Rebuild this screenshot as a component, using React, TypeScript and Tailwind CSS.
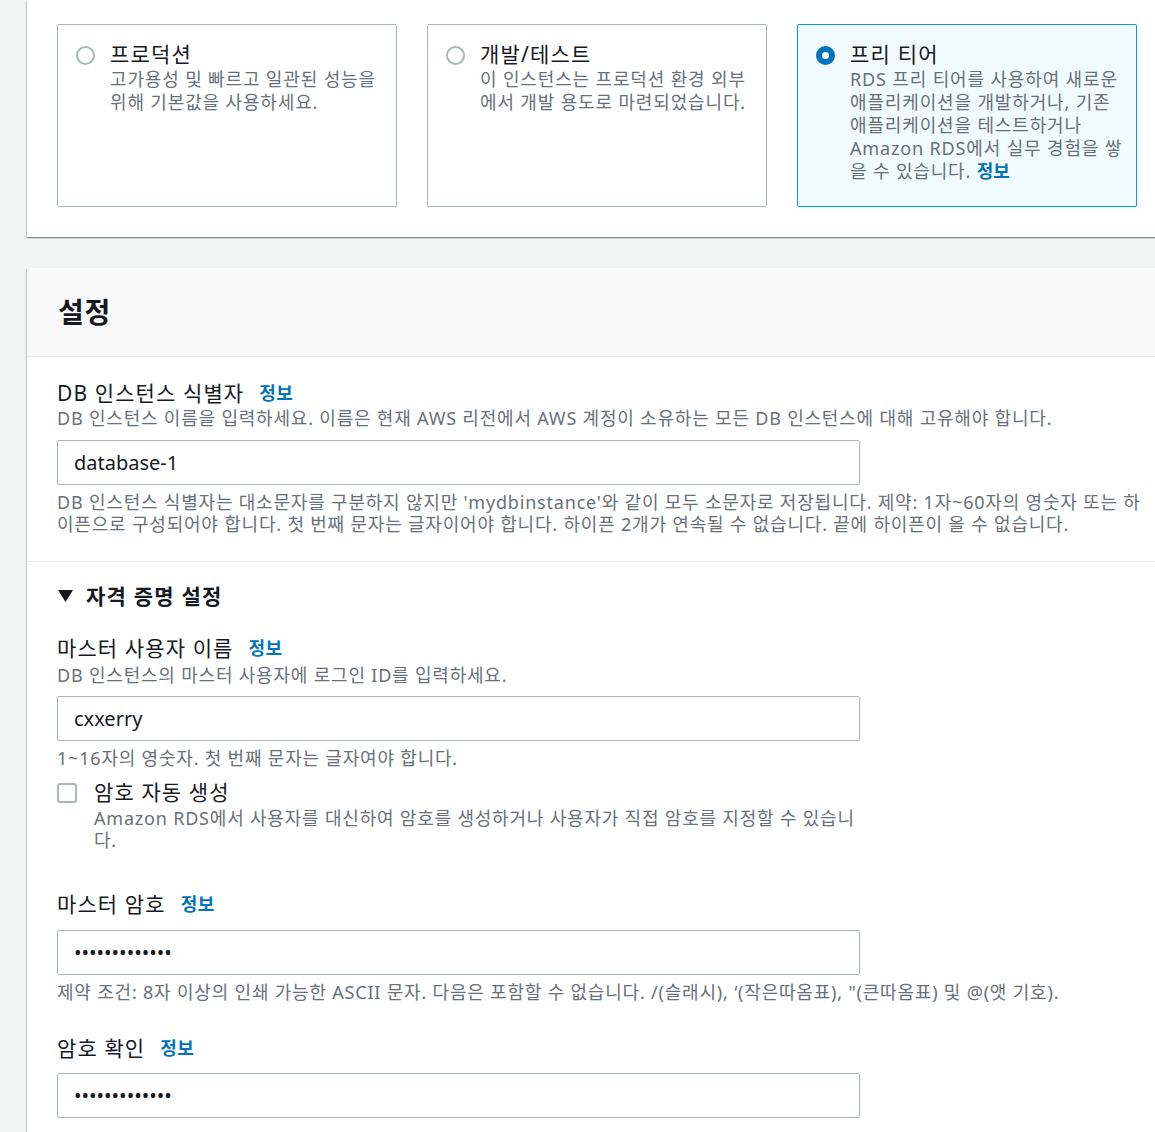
import type { ReactNode } from 'react'

const FONT = "font-['Noto_Sans','Noto_Sans_CJK_KR',sans-serif]"
const CARD_SHADOW =
  'shadow-[0_1px_1px_0_rgba(0,28,36,0.3),1px_1px_1px_0_rgba(0,28,36,0.15),-1px_1px_1px_0_rgba(0,28,36,0.15)]'

function InfoLink({ className = '' }: { className?: string }) {
  return <span className={`font-bold text-[18px] tracking-[0.5px] text-[#0073bb] ${className}`}>정보</span>
}

interface TileProps {
  title: string
  lines: ReactNode[]
  selected?: boolean
}

function RadioTile({ title, lines, selected = false }: TileProps) {
  return (
    <div
      className={`h-[183px] rounded-[2px] border pt-[16px] pl-[18px] flex gap-[15px] ${
        selected ? 'border-[#00a1c9] bg-[#f1faff]' : 'border-[#aab7b8] bg-white'
      }`}
    >
      {/* radio circle */}
      <div className="pt-[5px] shrink-0">
        {selected ? (
          <div className="w-[19px] h-[19px] rounded-full border-[6px] border-[#0073bb] bg-white" />
        ) : (
          <div className="w-[19px] h-[19px] rounded-full border-2 border-[#aab7b8] bg-white" />
        )}
      </div>
      <div>
        <div className="text-[21px] leading-[26px] tracking-[1.2px] text-[#16191f]">{title}</div>
        <div className="mt-[1px] text-[18px] leading-[23px] tracking-[0.85px] text-[#687078]">
          {lines.map((l, i) => (
            <div key={i} className="whitespace-nowrap">
              {l}
            </div>
          ))}
        </div>
      </div>
    </div>
  )
}

function Label({ children, className = '' }: { children: ReactNode; className?: string }) {
  return (
    <div className={`flex items-center gap-[15px] text-[21px] leading-[26px] tracking-[1.1px] text-[#16191f] ${className}`}>
      {children}
    </div>
  )
}

function Hint({ children, className = '' }: { children: ReactNode; className?: string }) {
  return <div className={`text-[18px] tracking-[0.8px] text-[#687078] ${className}`}>{children}</div>
}

function Field({ children, className = '' }: { children: ReactNode; className?: string }) {
  return (
    <div
      className={`w-[803px] h-[45px] rounded-[2px] border border-[#aab7b8] bg-white flex items-center pl-[16px] text-[20px] text-[#16191f] ${className}`}
    >
      {children}
    </div>
  )
}

function Dots() {
  return <span className="text-[20px] leading-none text-[#16191f]">{'•••••••••••••'}</span>
}

export default function App() {
  return (
    <div className={`${FONT} min-h-[1132px] bg-[#f2f3f3] pl-[27px] overflow-hidden`}>
      {/* environment templates */}
      <div className={`mr-[-10px] bg-white ${CARD_SHADOW} pt-[24px] pb-[30px] pl-[30px]`}>
        <div className="grid grid-cols-[340px_340px_340px] gap-[30px]">
          <RadioTile title="프로덕션" lines={['고가용성 및 빠르고 일관된 성능을', '위해 기본값을 사용하세요.']} />
          <RadioTile
            title="개발/테스트"
            lines={['이 인스턴스는 프로덕션 환경 외부', '에서 개발 용도로 마련되었습니다.']}
          />
          <RadioTile
            selected
            title="프리 티어"
            lines={[
              'RDS 프리 티어를 사용하여 새로운',
              '애플리케이션을 개발하거나, 기존',
              '애플리케이션을 테스트하거나',
              'Amazon RDS에서 실무 경험을 쌓',
              <>
                을 수 있습니다. <InfoLink className="tracking-normal" />
              </>,
            ]}
          />
        </div>
      </div>

      {/* settings */}
      <div className={`mt-[31px] mr-[-10px] bg-white ${CARD_SHADOW} pb-[20px]`}>
        <div className="h-[89px] bg-[#fafafa] border-b border-[#eaeded] flex items-center pl-[31px]">
          <h2 className="text-[28px] font-bold tracking-[0.8px] text-[#16191f]">설정</h2>
        </div>

        <div className="pl-[30px] pt-[23px] pb-[26px] border-b border-[#eaeded]">
          <Label>
            DB 인스턴스 식별자 <InfoLink />
          </Label>
          <Hint className="leading-[23px] mt-[1px]">
            DB 인스턴스 이름을 입력하세요. 이름은 현재 AWS 리전에서 AWS 계정이 소유하는 모든 DB 인스턴스에 대해
            고유해야 합니다.
          </Hint>
          <Field className="mt-[10px]">database-1</Field>
          <Hint className="leading-[22px] mt-[6px] whitespace-nowrap">
            <div>
              DB 인스턴스 식별자는 대소문자를 구분하지 않지만 'mydbinstance'와 같이 모두 소문자로 저장됩니다. 제약:
              1자~60자의 영숫자 또는 하
            </div>
            <div>
              이픈으로 구성되어야 합니다. 첫 번째 문자는 글자이어야 합니다. 하이픈 2개가 연속될 수 없습니다. 끝에
              하이픈이 올 수 없습니다.
            </div>
          </Hint>
        </div>

        <div className="pl-[30px] pt-[21px]">
          <div className="flex items-center gap-[13px] text-[21px] leading-[26px] tracking-[1.2px] font-bold text-[#16191f]">
            <svg width="15" height="12" viewBox="0 0 15 12" className="ml-[1px]">
              <path d="M0 0 H15 L7.5 12 Z" fill="#16191f" />
            </svg>
            자격 증명 설정
          </div>

          <Label className="mt-[26px]">
            마스터 사용자 이름 <InfoLink />
          </Label>
          <Hint className="leading-[23px] mt-[3px]">DB 인스턴스의 마스터 사용자에 로그인 ID를 입력하세요.</Hint>
          <Field className="mt-[9px]">cxxerry</Field>
          <Hint className="leading-[22px] mt-[6px]">1~16자의 영숫자. 첫 번째 문자는 글자여야 합니다.</Hint>

          <div className="mt-[10px] flex gap-[17px]">
            <div className="pt-[4px] shrink-0">
              <div className="w-[20px] h-[20px] rounded-[3px] border-2 border-[#aab7b8] bg-white" />
            </div>
            <div>
              <div className="text-[21px] leading-[26px] tracking-[1.1px] text-[#16191f]">암호 자동 생성</div>
              <Hint className="leading-[22px] mt-[2px] whitespace-nowrap">
                <div>Amazon RDS에서 사용자를 대신하여 암호를 생성하거나 사용자가 직접 암호를 지정할 수 있습니</div>
                <div>다.</div>
              </Hint>
            </div>
          </div>

          <Label className="mt-[40px]">
            마스터 암호 <InfoLink />
          </Label>
          <Field className="mt-[13px]">
            <Dots />
          </Field>
          <Hint className="leading-[22px] mt-[6px]">
            제약 조건: 8자 이상의 인쇄 가능한 ASCII 문자. 다음은 포함할 수 없습니다. /(슬래시), ‘(작은따옴표),
            "(큰따옴표) 및 @(앳 기호).
          </Hint>

          <Label className="mt-[32px]">
            암호 확인 <InfoLink />
          </Label>
          <Field className="mt-[12px]">
            <Dots />
          </Field>
        </div>
      </div>
    </div>
  )
}
